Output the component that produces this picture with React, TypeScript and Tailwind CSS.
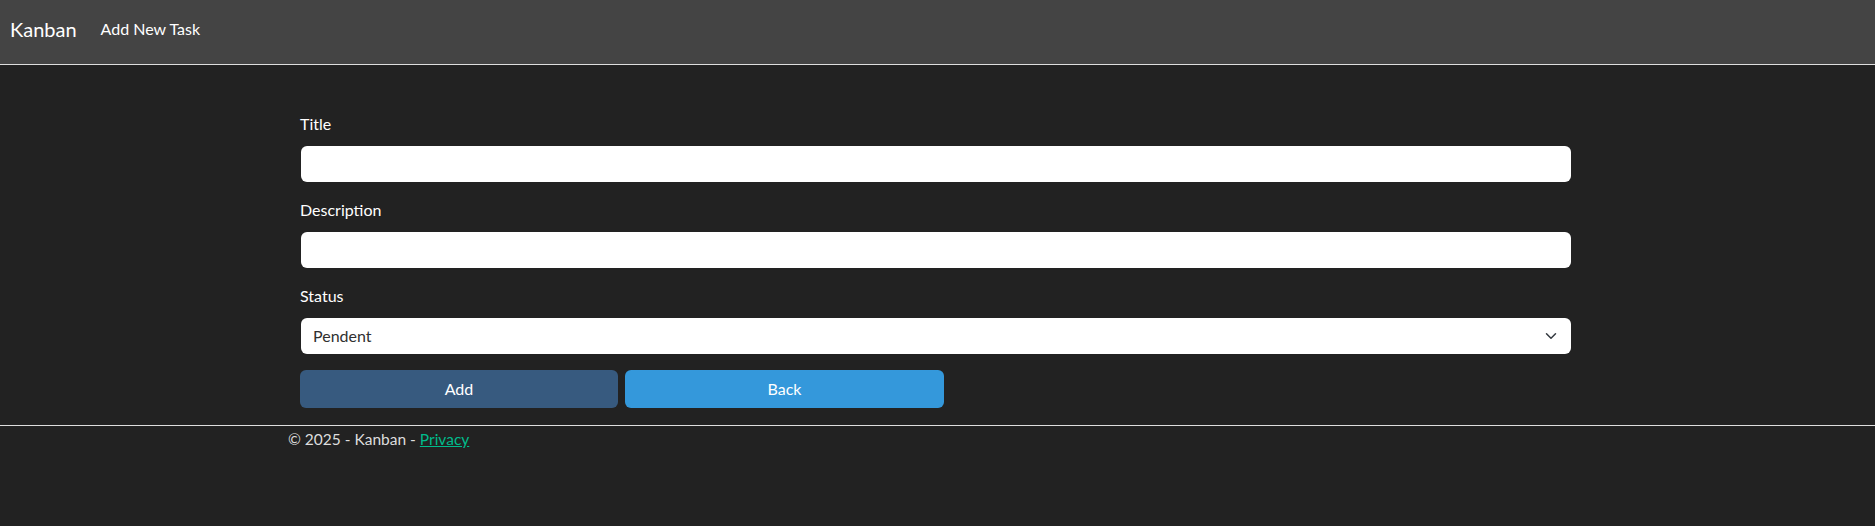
import { useState } from 'react';

const FONT = "font-['Lato','Open_Sans',sans-serif]";

function Field({ label, children }: { label: string; children: React.ReactNode }) {
  return (
    <div className="flex flex-col mb-[16px]">
      <label className="text-[16px] leading-[24px] text-white mb-[10px]">{label}</label>
      {children}
    </div>
  );
}

export default function App() {
  const [title, setTitle] = useState('');
  const [description, setDescription] = useState('');
  const [status, setStatus] = useState('Pendent');

  return (
    <div className={`min-h-[526px] bg-[#222222] ${FONT}`}>
      {/* Navbar */}
      <nav className="h-[65px] bg-[#444444] border-b border-[#dedede] flex items-center pl-[10px] pb-[6px]">
        <span className="text-[20px] text-white mr-[24px] leading-none">Kanban</span>
        <a className="text-[16px] text-white leading-none">Add New Task</a>
      </nav>

      {/* Form */}
      <main className="pt-[47px] pl-[300px] w-[1571px]">
        <Field label="Title">
          <input
            value={title}
            onChange={(e) => setTitle(e.target.value)}
            className="ml-[1px] h-[36px] bg-white rounded-[6px] px-[12px] text-[16px] text-[#303030] outline-none"
          />
        </Field>
        <Field label="Description">
          <input
            value={description}
            onChange={(e) => setDescription(e.target.value)}
            className="ml-[1px] h-[36px] bg-white rounded-[6px] px-[12px] text-[16px] text-[#303030] outline-none"
          />
        </Field>
        <Field label="Status">
          <div className="relative ml-[1px]">
            <select
              value={status}
              onChange={(e) => setStatus(e.target.value)}
              className="appearance-none w-full h-[36px] bg-white rounded-[6px] pl-[12px] text-[16px] text-[#303030] outline-none"
            >
              <option>Pendent</option>
              <option>In Progress</option>
              <option>Done</option>
            </select>
            <svg
              className="absolute right-[13px] top-[12px] pointer-events-none"
              width="14"
              height="12"
              viewBox="0 0 16 16"
              fill="none"
              stroke="#343a40"
              strokeWidth="2"
              strokeLinecap="round"
              strokeLinejoin="round"
            >
              <path d="M2 5l6 6 6-6" />
            </svg>
          </div>
        </Field>
        <div className="flex gap-[7px] mt-[1px]">
          <button className="w-[318px] h-[38px] rounded-[6px] bg-[#375a7f] text-white text-[16px]">Add</button>
          <button className="w-[319px] h-[38px] rounded-[6px] bg-[#3498db] text-white text-[16px]">Back</button>
        </div>
      </main>

      {/* Footer */}
      <footer className="mt-[17px] border-t border-[#dedede] pl-[288px] pt-[1px]">
        <span className="text-[15.5px] leading-[24px] text-[#dddddd]">
          © 2025 - Kanban - <a className="text-[#00bc8c] underline">Privacy</a>
        </span>
      </footer>
    </div>
  );
}
